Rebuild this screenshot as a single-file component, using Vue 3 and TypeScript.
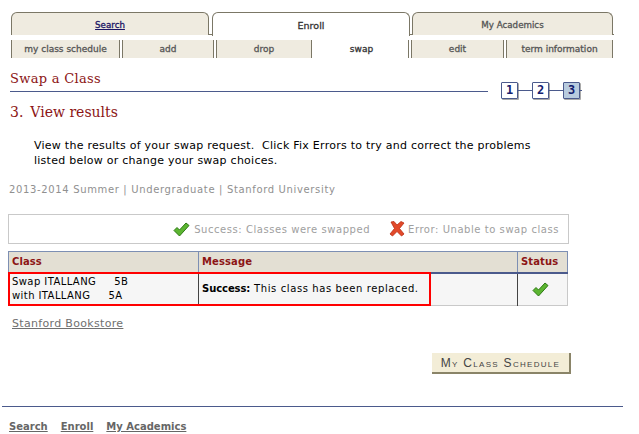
<script setup lang="ts">
const mainTabs = [
  { label: 'Search', active: false, link: true },
  { label: 'Enroll', active: true, link: false },
  { label: 'My Academics', active: false, link: false },
]
const subTabs = [
  { label: 'my class schedule', w: 109, active: false },
  { label: 'add', w: 92, active: false },
  { label: 'drop', w: 96, active: false },
  { label: 'swap', w: 95, active: true },
  { label: 'edit', w: 93, active: false },
  { label: 'term information', w: 107, active: false },
]
const steps = ['1', '2', '3']
const check = 'M1 8.5 L4 5.5 L6.5 8 L13 1 L16 3.5 L6.5 14 Z'
const cross = 'M2 1 L5 0.5 L8 4 L12 0.5 L15 2 L10.5 7.5 L15 13 L12.5 15 L8 10.5 L3.5 15 L1 13 L5.5 7.5 Z'
</script>

<template>
  <div class="page">
    <nav class="main-tabs">
      <div v-for="t in mainTabs" :key="t.label" class="main-tab" :class="{ active: t.active }">
        <a v-if="t.link" class="tab-link">{{ t.label }}</a>
        <span v-else>{{ t.label }}</span>
      </div>
    </nav>
    <nav class="sub-tabs">
      <div
        v-for="t in subTabs"
        :key="t.label"
        class="sub-tab"
        :class="{ active: t.active }"
        :style="{ width: t.w + 'px' }"
      >{{ t.label }}</div>
    </nav>

    <header class="title-row">
      <h1 class="title">Swap a Class</h1>
      <div class="steps">
        <template v-for="(s, i) in steps" :key="s">
          <span v-if="i > 0" class="step-line"></span>
          <span class="step" :class="{ current: i === 2 }">{{ s }}</span>
        </template>
        <span class="step-tick"></span>
      </div>
    </header>

    <h2 class="subtitle"><span class="num">3.</span>View results</h2>

    <p class="intro">View the results of your swap request.&nbsp; Click Fix Errors to try and correct the problems<br />listed below or change your swap choices.</p>

    <p class="term">2013-2014 Summer | Undergraduate | Stanford University</p>

    <div class="legend">
      <svg class="ico" width="17" height="15" viewBox="0 0 17 15"><path :d="check" fill="#5cb531" stroke="#2c7a12" stroke-width="1" /></svg>
      <span class="legend-text first">Success: Classes were swapped</span>
      <svg class="ico err" width="16" height="16" viewBox="0 0 16 16"><path :d="cross" fill="#e2492a" stroke="#b92c12" stroke-width="0.8" /></svg>
      <span class="legend-text">Error: Unable to swap class</span>
    </div>

    <div class="table-wrap">
      <table class="results">
        <thead>
          <tr>
            <th class="c1">Class</th>
            <th class="c2">Message</th>
            <th class="c3">Status</th>
          </tr>
        </thead>
        <tbody>
          <tr>
            <td class="c1 pre">Swap ITALLANG&nbsp;&nbsp;&nbsp;&nbsp; 5B<br />with ITALLANG&nbsp;&nbsp;&nbsp;&nbsp; 5A</td>
            <td class="c2"><b>Success:</b> This class has been replaced.</td>
            <td class="c3 center"><svg width="17" height="15" viewBox="0 0 17 15"><path :d="check" fill="#5cb531" stroke="#2c7a12" stroke-width="1" /></svg></td>
          </tr>
        </tbody>
      </table>
      <div class="highlight"></div>
    </div>

    <a class="bookstore">Stanford Bookstore</a>

    <div class="actions">
      <button class="btn" type="button">My Class Schedule</button>
    </div>

    <footer class="footer">
      <a>Search</a>
      <a>Enroll</a>
      <a>My Academics</a>
    </footer>
  </div>
</template>

<style>
html, body { margin: 0; background: #fff; }
</style>

<style scoped>
.page {
  width: 639px;
  height: 434px;
  overflow: hidden;
  box-sizing: border-box;
  padding-top: 12px;
  font-family: "DejaVu Sans", Verdana, sans-serif;
  font-size: 11px;
  color: #000;
  position: relative;
}
.main-tabs {
  display: flex;
  margin-left: 11px;
  width: 603px;
  height: 23px;
  box-sizing: border-box;
  border-bottom: 1px solid #7b7766;
}
.main-tab {
  box-sizing: border-box;
  height: 23px;
  width: 198px;
  margin-right: 3px;
  background: #efebe0;
  border: 1px solid #7b7766;
  border-bottom: none;
  border-radius: 6px 6px 0 0;
  text-align: center;
  font-size: 8.7px;
  -webkit-text-stroke: 0.3px;
  line-height: 25px;
  color: #555;
}
.main-tab:nth-child(2) { margin-right: 2px; }
.main-tab:last-child { width: 201px; margin-right: 0; }
.main-tab.active { background: #fff; color: #333; height: 24px; position: relative; font-size: 9.5px; }
.tab-link { color: #1a1464; text-decoration: underline; }
.sub-tabs {
  display: flex;
  margin: 5px 0 0 11px;
  height: 18px;
  gap: 2px;
}
.sub-tab {
  box-sizing: border-box;
  height: 18px;
  background: #efebe0;
  border-left: 1px solid #7b7766;
  border-right: 1px solid #7b7766;
  text-align: center;
  font-size: 9px;
  -webkit-text-stroke: 0.3px;
  line-height: 18px;
  color: #555;
}
.sub-tab.active { background: #fff; color: #333; border-left-color: #fff; }
.title-row {
  display: flex;
  align-items: flex-end;
  margin: 0 0 0 10px;
  height: 34px;
}
.title {
  margin: 0 13px 0 0;
  width: 478px;
  height: 33px;
  box-sizing: border-box;
  padding-top: 11px;
  border-bottom: 1px solid #4b5a8c;
  font-family: "DejaVu Serif", Georgia, serif;
  font-size: 13px;
  line-height: 17px;
  font-weight: normal;
  color: #8c1515;
  letter-spacing: 0.3px;
}
.steps {
  display: flex;
  align-items: center;
  height: 18px;
  margin-bottom: -7px;
}
.step {
  box-sizing: border-box;
  width: 17px;
  height: 17px;
  background: #fff;
  border: 1px solid #4b5a8c;
  box-shadow: 1px 1px 0 #a9a9a9;
  border-radius: 1px;
  text-align: center;
  font-family: "DejaVu Sans Mono", monospace;
  font-weight: bold;
  font-size: 12px;
  line-height: 15px;
  color: #14206e;
}
.step.current { background: #b8cbde; }
.step-line { width: 14px; height: 1px; background: #4b5a8c; }
.step-tick { width: 2px; height: 1px; background: #4b5a8c; }
.subtitle {
  margin: 9px 0 0 10px;
  font-family: "DejaVu Serif", Georgia, serif;
  font-size: 14px;
  line-height: 22px;
  font-weight: normal;
  color: #8c1515;
}
.num { margin-right: 7px; }
.intro {
  margin: 15px 0 0 34px;
  font-size: 11px;
  line-height: 15px;
  letter-spacing: 0.25px;
}
.term {
  margin: 15px 0 0 9px;
  font-size: 10px;
  line-height: 14px;
  color: #909090;
  letter-spacing: 0.65px;
}
.legend {
  display: flex;
  align-items: center;
  justify-content: flex-end;
  box-sizing: border-box;
  margin: 17px 0 0 8px;
  width: 561px;
  height: 30px;
  border: 1px solid #c9c9c9;
  padding-right: 9px;
  font-size: 10px;
  color: #a0a0a0;
  letter-spacing: 0.55px;
}
.ico { margin-right: 4px; }
.ico.err { margin-right: 3px; }
.legend-text.first { margin-right: 19px; }
.table-wrap {
  position: relative;
  margin: 7px 0 0 8px;
  width: 560px;
}
.results {
  border-collapse: collapse;
  table-layout: fixed;
  width: 560px;
  border: 1px solid #c9c9c9;
  border-top: none;
}
.results th {
  height: 21px;
  padding: 0 3px;
  box-sizing: border-box;
  background: #e3dfd3;
  border: 1px solid #7d8fb3;
  border-bottom: 2px solid #4b5a8c;
  color: #8c1515;
  font-size: 10px;
  text-align: left;
  letter-spacing: 0.1px;
}
.results td {
  height: 33px;
  padding: 0 3px;
  box-sizing: border-box;
  background: #f6f6f6;
  border-left: 1px solid #444;
  font-size: 10px;
  line-height: 14px;
  letter-spacing: 0.6px;
  vertical-align: middle;
}
.results td b { letter-spacing: -0.07px; }
.results td:first-child { border-left: none; letter-spacing: 0.42px; }
.c1 { width: 190px; }
.c3 { width: 50px; }
.center svg { display: block; margin-left: 11px; }
.highlight {
  position: absolute;
  left: 0;
  top: 21px;
  width: 423px;
  height: 34px;
  box-sizing: border-box;
  border: 2px solid #f00;
  pointer-events: none;
}
.bookstore {
  display: block;
  margin: 10px 0 0 12px;
  font-size: 11px;
  line-height: 15px;
  color: #707070;
  text-decoration: underline;
  letter-spacing: 0.32px;
}
.actions {
  display: flex;
  justify-content: flex-end;
  width: 571px;
  margin-top: 22px;
}
.btn {
  box-sizing: border-box;
  width: 139px;
  height: 21px;
  padding: 0;
  background: #f3edd7;
  border: none;
  border-right: 2px solid #8a8468;
  border-bottom: 2px solid #8a8468;
  font-family: "Liberation Sans", Arial, sans-serif;
  font-size: 12px;
  font-variant: small-caps;
  letter-spacing: 1.3px;
  color: #444;
}
.footer {
  display: flex;
  gap: 13px;
  box-sizing: border-box;
  margin: 32px 0 0 2px;
  width: 621px;
  border-top: 1px solid #4b5a8c;
  padding: 13px 0 0 7px;
  font-size: 10px;
  line-height: 13px;
  font-weight: bold;
}
.footer a { color: #666; text-decoration: underline; }
</style>
